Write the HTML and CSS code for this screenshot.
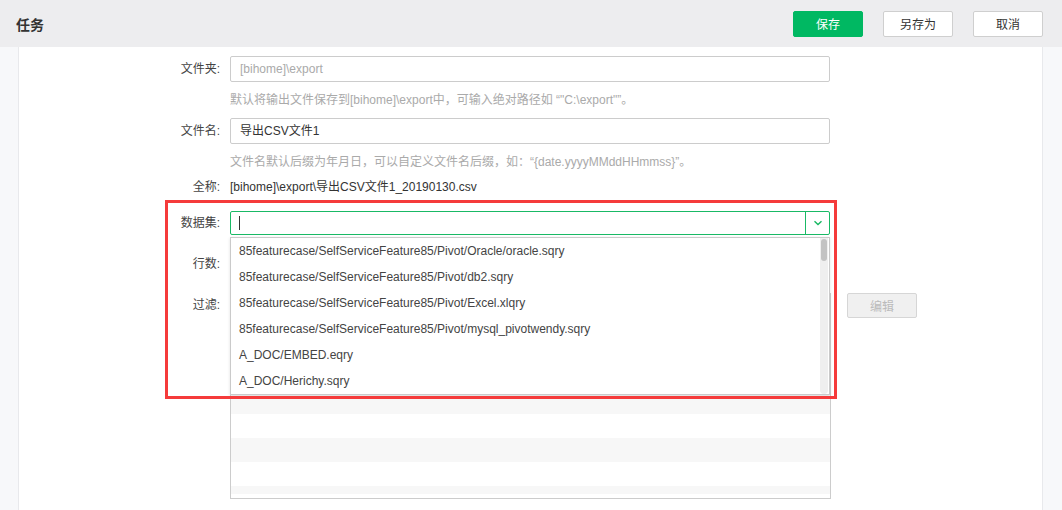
FILE: index.html
```html
<!DOCTYPE html>
<html lang="zh">
<head>
<meta charset="utf-8">
<title>任务</title>
<link rel="stylesheet" href="styles.css">
</head>
<body>
<div class="header">
  <div class="title">任务</div>
  <div class="actions">
    <button class="btn btn-primary">保存</button>
    <button class="btn">另存为</button>
    <button class="btn">取消</button>
  </div>
</div>
<div class="main">
  <div class="panel">
    <div class="form">
      <div class="row">
        <div class="label">文件夹:</div>
        <div class="input placeholder">[bihome]\export</div>
      </div>
      <div class="hint">默认将输出文件保存到[bihome]\export中，可输入绝对路径如 “"C:\export"”。</div>
      <div class="row">
        <div class="label">文件名:</div>
        <div class="input">导出CSV文件1</div>
      </div>
      <div class="hint">文件名默认后缀为年月日，可以自定义文件名后缀，如：“{date.yyyyMMddHHmmss}”。</div>
      <div class="row row-text">
        <div class="label">全称:</div>
        <div class="value">[bihome]\export\导出CSV文件1_20190130.csv</div>
      </div>
      <div class="row row-dataset">
        <div class="label">数据集:</div>
        <div class="combo">
          <div class="combo-input"><span class="caret"></span></div>
          <div class="combo-arrow">
            <svg width="10" height="6" viewBox="0 0 10 6"><path d="M1.5 1.2 L5 4.5 L8.5 1.2" fill="none" stroke="#17b862" stroke-width="1.4"/></svg>
          </div>
          <div class="dropdown">
            <div class="options">
              <div class="option">85featurecase/SelfServiceFeature85/Pivot/Oracle/oracle.sqry</div>
              <div class="option">85featurecase/SelfServiceFeature85/Pivot/db2.sqry</div>
              <div class="option">85featurecase/SelfServiceFeature85/Pivot/Excel.xlqry</div>
              <div class="option">85featurecase/SelfServiceFeature85/Pivot/mysql_pivotwendy.sqry</div>
              <div class="option">A_DOC/EMBED.eqry</div>
              <div class="option">A_DOC/Herichy.sqry</div>
            </div>
            <div class="scrollbar"><div class="thumb"></div></div>
          </div>
        </div>
      </div>
      <div class="row row-lines">
        <div class="label">行数:</div>
        <div class="input input-small"></div>
      </div>
      <div class="row row-filter">
        <div class="label">过滤:</div>
        <div class="table">
          <div class="tr odd"></div>
          <div class="tr"></div>
          <div class="tr odd"></div>
          <div class="tr"></div>
          <div class="tr odd"></div>
          <div class="tr"></div>
          <div class="tr odd"></div>
          <div class="tr"></div>
          <div class="tr odd last"></div>
        </div>
        <button class="btn btn-disabled">编辑</button>
      </div>
    </div>
  </div>
</div>
<div class="annotation"></div>
</body>
</html>
```

FILE: styles.css
```css
* { box-sizing: border-box; }
html, body { margin: 0; padding: 0; }
body {
  width: 1062px;
  height: 510px;
  overflow: hidden;
  position: relative;
  font-family: "Liberation Sans", "Noto Sans CJK SC", sans-serif;
  font-size: 12px;
  color: #333;
  background: #f7f8fa;
}
.header {
  height: 47px;
  background: #ededef;
  display: flex;
  align-items: center;
  padding: 0 19px 0 16px;
}
.title {
  font-size: 14px;
  font-weight: bold;
  color: #333;
}
.actions {
  margin-left: auto;
  display: flex;
  gap: 20px;
}
.btn {
  width: 70px;
  height: 26px;
  border: 1px solid #cfcfcf;
  border-radius: 2px;
  background: #fff;
  color: #333;
  font-family: inherit;
  font-size: 12px;
  padding: 0;
  cursor: pointer;
}
.btn-primary {
  background: #00b862;
  border-color: #00b862;
  color: #fff;
}
.btn-disabled {
  height: 25px;
  background: #f0f0f0;
  border-color: #d6d6d6;
  color: #bbb;
  margin-left: 16px;
}
.main {
  height: 463px;
  display: flex;
}
.panel {
  margin-left: 18px;
  width: 1025px;
  height: 100%;
  background: #fff;
  border-left: 1px solid #e8e9ec;
  border-right: 1px solid #e8e9ec;
}
.form {
  padding-top: 9px;
}
.row {
  display: flex;
  align-items: flex-start;
}
.label {
  width: 211px;
  padding-right: 10px;
  text-align: right;
  color: #444;
  line-height: 26px;
  flex: none;
}
.input {
  width: 600px;
  height: 26px;
  border: 1px solid #ccc;
  border-radius: 2px;
  padding: 0 9px;
  line-height: 24px;
  color: #333;
}
.input.placeholder { color: #aaa; }
.input-small { width: 200px; }
.hint {
  margin-left: 230px;
  height: 36px;
  line-height: 36px;
  color: #aaa;
  margin-left: 211px;
}
.row-text {
  margin-top: 0;
}
.row-text .label,
.row-text .value {
  line-height: 14px;
}
.row-text .value { color: #333; }
.row-dataset {
  margin-top: 17px;
}
.row-dataset .label { line-height: 24px; }
.combo {
  position: relative;
  width: 600px;
  height: 24px;
  border: 1px solid #19b965;
  border-radius: 2px;
  display: flex;
}
.combo-input {
  flex: 1;
  padding-left: 8px;
  display: flex;
  align-items: center;
}
.caret {
  width: 1px;
  height: 14px;
  background: #333;
}
.combo-arrow {
  width: 24px;
  border-left: 1px solid #19b965;
  display: flex;
  align-items: center;
  justify-content: center;
}
.dropdown {
  position: absolute;
  top: 25px;
  left: -1px;
  width: 600px;
  height: 158px;
  background: #fff;
  border: 1px solid #cacaca;
  box-shadow: 0 1px 3px rgba(0,0,0,0.12);
  z-index: 5;
  display: flex;
}
.options {
  flex: 1;
  padding-top: 0;
}
.option {
  height: 26px;
  line-height: 26px;
  padding-left: 8px;
  color: #444;
  white-space: nowrap;
}
.scrollbar {
  width: 8px;
  margin-right: 1px;
  background: #efefef;
  border-radius: 0 0 4px 4px;
  position: relative;
}
.thumb {
  position: absolute;
  top: 1px;
  left: 1px;
  width: 6px;
  height: 22px;
  border-radius: 3px;
  background: #c3c3c3;
}
.row-lines {
  margin-top: 16px;
}
.row-filter {
  margin-top: 16px;
}
.row-filter .label { line-height: 24px; }
.table {
  width: 601px;
  height: 206px;
  border: 1px solid #ccc;
  overflow: hidden;
}
.tr {
  height: 24px;
  background: #fff;
}
.tr.odd { background: #f7f7f7; }
.tr.last { height: 8px; }
.annotation {
  position: absolute;
  left: 165px;
  top: 200px;
  width: 672px;
  height: 199px;
  border: 3px solid #f53b3b;
  z-index: 10;
  pointer-events: none;
}
```
